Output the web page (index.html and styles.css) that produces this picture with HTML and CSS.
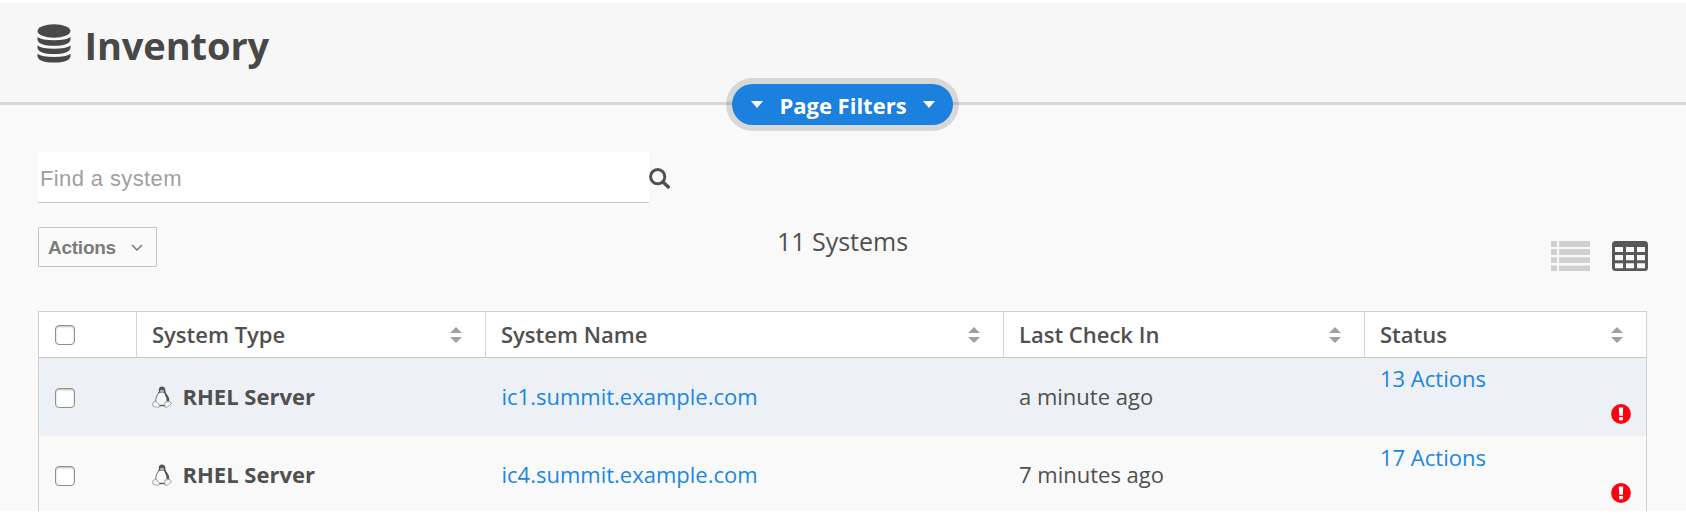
FILE: index.html
```html
<!DOCTYPE html>
<html lang="en">
<head>
<meta charset="utf-8">
<title>Inventory</title>
<link rel="stylesheet" href="styles.css">
</head>
<body>
<svg class="defs" width="0" height="0">
  <symbol id="sort" viewBox="0 0 12 16"><path d="M6 0L12 6H0zM6 16L0 10H12z" fill="#a0a0a0"/></symbol>
  <symbol id="alert" viewBox="0 0 20 20"><circle cx="10" cy="10" r="9.9" fill="#ff0010"/><path d="M7.800 3.600H12.200L11.800 11.800H8.200zM8.100 13H11.900V16.300H8.100z" fill="#fff"/></symbol>
  <symbol id="tux" viewBox="0 0 20 22">
    <path d="M7 6C6 8.500 4.200 10 3.800 13.500C3.500 16 5 18.500 7 19.300H13C16 18 16.500 15.500 15.800 13C15.200 10.500 13.200 9 12.800 6z" fill="#f8f9fa" stroke="#666" stroke-width="1"/>
    <path d="M10 .4C7.800 .4 6.700 2 6.800 4C6.900 6 7 6.300 6.600 7.500L8 6.500L10 7L12 6.200C12.600 9 15 11.500 14.500 15L17 15.500C18 12.500 16.200 10 14.600 8C13.200 6 13.500 4.500 13.200 3C12.900 1.200 11.600 .4 10 .4z" fill="#555"/>
    <path d="M8 4.300Q10 3 12 4.300L11.500 6.200L10 7L8.300 6.200z" fill="#b5b7b9"/>
    <path d="M1 16.500L4 15.200L7.700 19.500Q7.500 21.800 5 21.300L.8 20.200zM13 16L18 15.500L19.400 18L15 21.300Q12.800 21.800 12.700 20z" fill="#f8f9fa" stroke="#909090" stroke-width=".8"/>
    <path d="M7.500 20Q10 19 12.700 20" fill="none" stroke="#555" stroke-width="1.200"/>
  </symbol>
</svg>
<div class="page">
  <header class="header">
    <svg class="db" viewBox="0 0 34 39" width="34" height="39" fill="#484848"><ellipse cx="17" cy="7" rx="16.500" ry="6.800"/><path d="M.5 13Q5 16.300 17 16.300T33.500 13V16Q32 21.800 17 21.800T.5 16zM.5 21.500Q5 24.800 17 24.800T33.500 21.500V24Q32 30 17 30T.5 24zM.5 29.800Q5 33.100 17 33.100T33.500 29.800V32.500Q32 38.500 17 38.500T.5 32.500z"/></svg>
    <h1 class="title">Inventory</h1>
    <button class="filters"><i class="caret"></i><span class="filters-label">Page Filters</span><i class="caret"></i></button>
  </header>
  <main class="main">
    <div class="search">
      <input class="search-input" placeholder="Find a system">
      <svg class="magnifier" width="21" height="21" viewBox="0 0 21 21" fill="none" stroke="#505050"><circle cx="8.700" cy="8.700" r="7.100" stroke-width="3"/><path d="M14 14L19.300 19" stroke-width="3.400" stroke-linecap="round"/></svg>
    </div>
    <div class="toolbar">
      <button class="actions"><span class="actions-label">Actions</span><svg width="12" height="7" viewBox="0 0 12 7" fill="none" stroke="#777" stroke-width="1.500"><path d="M1 1L6 6L11 1"/></svg></button>
      <div class="count">11 Systems</div>
      <div class="views">
        <svg width="39" height="30" viewBox="0 0 39 30" fill="#d0d0d0"><path d="M0 0H6V6H0zM8 0H39V6H8zM0 8H6V14H0zM8 8H39V14H8zM0 16.200H6V22H0zM8 16.200H39V22H8zM0 24.400H6V30H0zM8 24.400H39V30H8z"/></svg>
        <svg width="36" height="30" viewBox="0 0 36 30"><rect width="36" height="30" rx="3.500" fill="#585858"/><path d="M3 6h8v5H3zM14 6h8v5h-8zM25 6h8v5h-8zM3 14h8v5.300H3zM14 14h8v5.300h-8zM25 14h8v5.300h-8zM3 22.200h8v5H3zM14 22.200h8v5h-8zM25 22.200h8v5h-8z" fill="#f9f9f9"/></svg>
      </div>
    </div>
    <div class="table">
      <div class="row head">
        <div class="cell"><span class="check"></span></div>
        <div class="cell"><span class="text">System Type</span><svg class="sort"><use href="#sort"/></svg></div>
        <div class="cell"><span class="text">System Name</span><svg class="sort"><use href="#sort"/></svg></div>
        <div class="cell"><span class="text">Last Check In</span><svg class="sort"><use href="#sort"/></svg></div>
        <div class="cell"><span class="text">Status</span><svg class="sort"><use href="#sort"/></svg></div>
      </div>
      <div class="row striped">
        <div class="cell select"><span class="check"></span></div>
        <div class="cell type"><svg class="tux"><use href="#tux"/></svg><span class="text">RHEL Server</span></div>
        <div class="cell name"><span class="text">ic1.summit.example.com</span></div>
        <div class="cell"><span class="text">a minute ago</span></div>
        <div class="cell status"><span>13 Actions</span><svg class="alert"><use href="#alert"/></svg></div>
      </div>
      <div class="row">
        <div class="cell select"><span class="check"></span></div>
        <div class="cell type"><svg class="tux"><use href="#tux"/></svg><span class="text">RHEL Server</span></div>
        <div class="cell name"><span class="text">ic4.summit.example.com</span></div>
        <div class="cell"><span class="text">7 minutes ago</span></div>
        <div class="cell status second"><span>17 Actions</span><svg class="alert"><use href="#alert"/></svg></div>
      </div>
    </div>
  </main>
</div>
</body>
</html>
```
FILE: styles.css
```css
* { box-sizing: border-box; }
body { margin: 0; background: #fff; font-family: "Open Sans", sans-serif; color: #505050; overflow: hidden; }
.defs { position: absolute; }
.page { margin-top: 3px; height: 508px; background: #f9f9f9; overflow: hidden; }
.header { position: relative; height: 102px; padding: 21px 0 0 37px; display: flex; align-items: flex-start; background: #f7f7f7; border-bottom: 3px solid #d7d7d7; }
.title { margin: -2px 0 0 13.5px; font-size: 38px; letter-spacing: -.1px; line-height: 46px; font-weight: 700; color: #484848; }
.filters { position: absolute; left: 732px; top: 81px; width: 221px; height: 41px; padding: 0 18px 0 19px; display: flex; align-items: center; justify-content: space-between; border: 0; border-radius: 21px; background: #1c80de; color: #fff; font: 700 22px "Open Sans", sans-serif; box-shadow: 0 0 0 6px rgba(0, 0, 0, .13); }
.filters-label { white-space: nowrap; }
.caret { border: 6.5px solid transparent; border-top: 7px solid #fff; border-bottom: 0; }
.main { padding: 47px 39px 0 38px; }
.search { display: flex; align-items: center; height: 51px; }
.magnifier { margin-top: 2px; }
.search-input { width: 611px; height: 51px; padding: 3px 3px 0 2px; border: 0; border-bottom: 1px solid #c8c8c8; background: #fff; font: 22px "Liberation Sans", sans-serif; letter-spacing: .38px; }
.search-input::placeholder { color: #a0a0a0; opacity: 1; }
.toolbar { display: grid; grid-template-columns: 1fr auto 1fr; height: 108px; padding-top: 24px; align-items: start; }
.actions { width: 119px; height: 40px; padding: 0 13px 0 9px; display: flex; align-items: center; justify-content: space-between; border: 1px solid #c4c4c4; border-radius: 1px; background: #fafafa; color: #7b7b7b; font: 700 19px "Liberation Sans", sans-serif; letter-spacing: -.25px; }
.actions-label { padding-top: 2px; }
.count { margin-top: -1px; font-size: 25px; line-height: 30px; }
.views { display: flex; justify-content: flex-end; gap: 22px; padding-top: 14px; margin-right: -1px; }
.table { border: 1px solid #d1d1d1; border-bottom: 0; }
.row { display: grid; grid-template-columns: 98px 349px 518px 361px 1fr; height: 78px; font-size: 22px; }
.head { height: 46px; background: #fff; border-bottom: 1px solid #c4c4c4; font-weight: 600; }
.striped { background: #edf1f5; }
.cell { display: flex; align-items: center; padding: 0 15px; white-space: nowrap; line-height: 30px; }
.text { padding-bottom: 2px; }
.name .text { margin-left: .5px; }
.head .cell { border-right: 1px solid #d4d4d4; padding-right: 23px; }
.head .cell:last-child { border-right: 0; }
.check { width: 20px; height: 20px; margin-left: 1px; border: 1px solid #8e8e8e; border-radius: 4px; background: #fff; box-shadow: inset 0 1px 2px #bbb; }
.select { padding-top: 2px; }
.sort { width: 12px; height: 16px; margin-left: auto; }
.type { font-weight: 700; }
.tux { width: 20px; height: 22px; margin-right: 10.5px; }
.name, .status { color: #1c86e3; }
.status { flex-direction: column; align-items: stretch; justify-content: flex-start; padding-top: 5px; }
.status.second { padding-top: 6px; }
.alert { width: 20px; height: 20px; align-self: flex-end; margin-top: 11px; flex: none; }
```
